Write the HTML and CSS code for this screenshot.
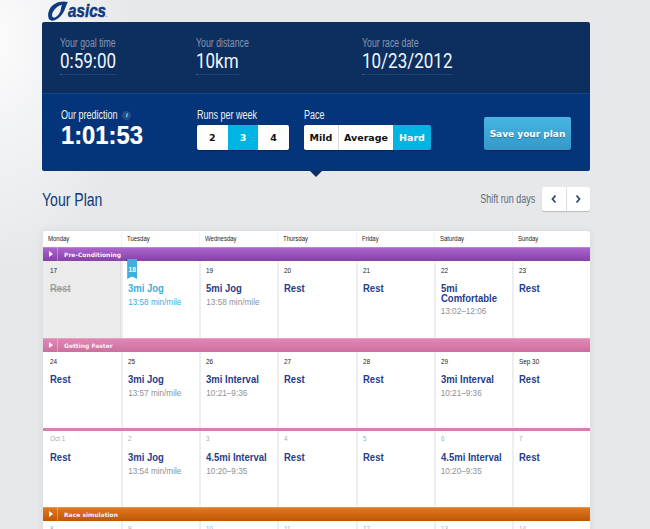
FILE: index.html
```html
<!DOCTYPE html>
<html lang="en">
<head>
<meta charset="utf-8">
<title>ASICS Your Plan</title>
<link rel="stylesheet" href="styles.css">
</head>
<body>
<div class="page">
  <header class="logo">
    <svg class="logo-mark" viewBox="0 0 20 20" width="20" height="20" aria-hidden="true">
      <path class="swoosh" fill-rule="evenodd" d="M19.800 1C13-1 5 2 2 7.500-1 13-.3 18.500 3 19.500 7 20.700 12 16.500 15 12 17 9 17.500 5.500 19.800 1ZM14 3.700C10 4.700 6.500 7.700 4.800 11 3.500 13.800 4 16.500 5.500 16.600 8 16.800 10.800 13.700 12.200 10.700 13.200 8.500 12.800 5.700 14 3.700Z"/>
    </svg>
    <span class="logo-word">asics<span class="logo-dot">.</span></span>
  </header>

  <section class="panel">
    <div class="goals">
      <div class="goal goal-time">
        <div class="goal-label">Your goal time</div>
        <div class="goal-value">0:59:00</div>
      </div>
      <div class="goal goal-distance">
        <div class="goal-label">Your distance</div>
        <div class="goal-value">10km</div>
      </div>
      <div class="goal">
        <div class="goal-label">Your race date</div>
        <div class="goal-value">10/23/2012</div>
      </div>
    </div>
    <div class="controls">
      <div class="prediction">
        <div class="prediction-head"><span class="control-label">Our prediction</span><span class="info">i</span></div>
        <div class="prediction-value">1:01:53</div>
      </div>
      <div class="control runs">
        <div class="control-label">Runs per week</div>
        <div class="segments">
          <span class="seg seg-run">2</span>
          <span class="seg seg-run seg-on">3</span>
          <span class="seg seg-run">4</span>
        </div>
      </div>
      <div class="control pace">
        <div class="control-label">Pace</div>
        <div class="segments">
          <span class="seg seg-mild">Mild</span>
          <span class="seg seg-average">Average</span>
          <span class="seg seg-hard seg-on">Hard</span>
        </div>
      </div>
      <button class="save" type="button">Save your plan</button>
    </div>
  </section>

  <div class="plan-head">
    <h1 class="plan-title">Your Plan</h1>
    <div class="shift">
      <span class="shift-label">Shift run days</span>
      <div class="shift-buttons">
        <span class="shift-btn"><svg viewBox="0 0 8 10" width="8" height="10" aria-hidden="true"><path class="chev" d="M5.500 1.500 2.500 5l3 3.500"/></svg></span>
        <span class="shift-btn"><svg viewBox="0 0 8 10" width="8" height="10" aria-hidden="true"><path class="chev" d="M2.500 1.500 5.500 5l-3 3.500"/></svg></span>
      </div>
    </div>
  </div>

  <section class="calendar">
    <div class="week days">
      <div class="dayname"><span>Monday</span></div><div class="dayname"><span>Tuesday</span></div><div class="dayname"><span>Wednesday</span></div><div class="dayname"><span>Thursday</span></div><div class="dayname"><span>Friday</span></div><div class="dayname"><span>Saturday</span></div><div class="dayname"><span>Sunday</span></div>
    </div>

    <div class="band band-purple"><span class="band-toggle"></span><span class="band-name">Pre-Conditioning</span></div>
    <div class="week week-first">
      <div class="cell cell-past"><div class="date">17</div><div class="workout past-text">Rest</div></div>
      <div class="cell cell-today">
        <div class="flag">18</div>
        <div class="workout">3mi Jog</div><div class="detail">13:58 min/mile</div>
      </div>
      <div class="cell"><div class="date">19</div><div class="workout">5mi Jog</div><div class="detail">13:58 min/mile</div></div>
      <div class="cell"><div class="date">20</div><div class="workout">Rest</div></div>
      <div class="cell"><div class="date">21</div><div class="workout">Rest</div></div>
      <div class="cell"><div class="date">22</div><div class="workout">5mi Comfortable</div><div class="detail">13:02–12:06</div></div>
      <div class="cell"><div class="date">23</div><div class="workout">Rest</div></div>
    </div>

    <div class="band band-pink"><span class="band-toggle"></span><span class="band-name">Getting Faster</span></div>
    <div class="week">
      <div class="cell"><div class="date">24</div><div class="workout">Rest</div></div>
      <div class="cell"><div class="date">25</div><div class="workout">3mi Jog</div><div class="detail">13:57 min/mile</div></div>
      <div class="cell"><div class="date">26</div><div class="workout">3mi Interval</div><div class="detail">10:21–9:36</div></div>
      <div class="cell"><div class="date">27</div><div class="workout">Rest</div></div>
      <div class="cell"><div class="date">28</div><div class="workout">Rest</div></div>
      <div class="cell"><div class="date">29</div><div class="workout">3mi Interval</div><div class="detail">10:21–9:36</div></div>
      <div class="cell"><div class="date">Sep 30</div><div class="workout">Rest</div></div>
    </div>
    <div class="rule-pink"></div>
    <div class="week week-faded">
      <div class="cell"><div class="date">Oct 1</div><div class="workout">Rest</div></div>
      <div class="cell"><div class="date">2</div><div class="workout">3mi Jog</div><div class="detail">13:54 min/mile</div></div>
      <div class="cell"><div class="date">3</div><div class="workout">4.5mi Interval</div><div class="detail">10:20–9:35</div></div>
      <div class="cell"><div class="date">4</div><div class="workout">Rest</div></div>
      <div class="cell"><div class="date">5</div><div class="workout">Rest</div></div>
      <div class="cell"><div class="date">6</div><div class="workout">4.5mi Interval</div><div class="detail">10:20–9:35</div></div>
      <div class="cell"><div class="date">7</div><div class="workout">Rest</div></div>
    </div>

    <div class="band band-orange"><span class="band-toggle"></span><span class="band-name">Race simulation</span></div>
    <div class="week week-faded">
      <div class="cell"><div class="date">8</div></div>
      <div class="cell"><div class="date">9</div></div>
      <div class="cell"><div class="date">10</div></div>
      <div class="cell"><div class="date">11</div></div>
      <div class="cell"><div class="date">12</div></div>
      <div class="cell"><div class="date">13</div></div>
      <div class="cell"><div class="date">14</div></div>
    </div>
  </section>
</div>
</body>
</html>
```
FILE: styles.css
```css
* { box-sizing: border-box; }
html, body { height: 100%; }
body {
  margin: 0;
  overflow: hidden;
  background: radial-gradient(ellipse 130px 230px at 0 40px, #fbfbfc 0, #e6e8ea 100%) no-repeat #e6e8ea;
  font-family: "Liberation Sans", Arial, sans-serif;
}
.page { width: 548px; margin-left: 42px; }

.logo { height: 22px; display: flex; align-items: flex-start; padding: 1px 0 0 6px; }
.logo-mark { display: block; flex: none; }
.swoosh { fill: #0f3a80; }
.logo-word {
  margin: -1px 0 0 0;
  font-size: 19px; line-height: 22px; font-weight: 700; font-style: italic;
  color: #0f3a80; -webkit-text-stroke: .5px #0f3a80;
  transform: scaleX(.8); transform-origin: left center;
}
.logo-dot { font-size: 6px; -webkit-text-stroke: 0; }

.panel { position: relative; border-radius: 2px; height: 149px; }
.panel::after {
  content: ""; position: absolute; left: 268px; top: 100%;
  border: 6px solid transparent; border-top-color: #0c2f5f; border-bottom: 0;
}
.goals {
  height: 71px; display: flex; padding-top: 14px; padding-left: 18px;
  background: #0c2f5f; border-radius: 2px 2px 0 0;
}
.goal-time { width: 136px; }
.goal-distance { width: 166px; }
.goal { flex: none; }
.goal-label {
  font-size: 12px; line-height: 14px; color: #8596b1;
  transform: scaleX(.73); transform-origin: left center;
}
.goal-value {
  display: table; margin-top: 1px;
  font-family: Roboto, sans-serif; font-size: 20px; line-height: 20px; color: #f4f6f9;
  padding-bottom: 3px; border-bottom: 1px dotted #3e5a84;
  transform: scaleX(.85); transform-origin: left center;
}
.controls {
  height: 78px; display: flex; padding: 14px 19px 0 19px; position: relative;
  background: #04357a; border-top: 1px solid #124487; border-radius: 0 0 2px 2px;
}
.prediction { width: 136px; }
.prediction-head { display: flex; align-items: center; height: 14px; }
.control-label {
  display: block; font-size: 12px; line-height: 14px; color: #edf1f7;
  transform: scaleX(.75); transform-origin: left center;
}
.info {
  flex: none; width: 9px; height: 9px; margin-left: -14px; border-radius: 50%;
  background: #234f8d; color: #d8e2f0; font: italic 700 6px/9px "Liberation Serif", serif; text-align: center;
}
.prediction-value {
  font-size: 25px; line-height: 28px; font-weight: 700; color: #fff; margin-top: -1px;
  -webkit-text-stroke: .2px #fff;
  transform: scaleX(.95); transform-origin: left center;
}
.runs { width: 107px; }
.pace { width: 181px; }
.segments { display: flex; margin-top: 3px; height: 25px; border-radius: 2px; overflow: hidden; box-shadow: 0 1px 1px rgba(0,0,0,.3); }
.runs .segments { width: 92px; }
.pace .segments { width: 127px; }
.seg {
  display: flex; align-items: center; justify-content: center;
  background: #fff; color: #111; font-family: "DejaVu Sans", sans-serif; font-size: 9.500px; font-weight: 700;
}
.seg-run { width: 31px; }
.seg-mild { width: 35px; border-right: 1px solid #d7d9dc; }
.seg-average { width: 54px; }
.seg-hard { width: 38px; }
.seg-on { background: #00b4e3; color: #fff; }
.save {
  align-self: flex-start; margin-top: 9px; margin-left: -1px;
  width: 87px; height: 33px; padding: 0; border: 0; border-radius: 2px;
  background: linear-gradient(#47b6e3, #3398c9);
  box-shadow: 0 1px 1px rgba(0,0,0,.35);
  color: #fff; font-family: "DejaVu Sans", sans-serif; font-size: 9px; font-weight: 700;
  text-shadow: 0 1px 1px rgba(0,0,0,.3);
}

.plan-head { height: 60px; display: flex; justify-content: space-between; align-items: flex-start; padding-top: 16px; }
.plan-title {
  margin: 0; font-size: 18px; line-height: 26px; font-weight: 400; color: #0f3a7a;
  transform: scaleX(.78); transform-origin: left center;
}
.shift { display: flex; align-items: center; gap: 7px; }
.shift-label {
  font-size: 12px; color: #5f6a79;
  transform: scaleX(.75); transform-origin: right center;
}
.shift-buttons { display: flex; width: 48px; height: 24px; border-radius: 2px; background: #fff; box-shadow: 0 1px 1px rgba(0,0,0,.2); }
.shift-btn { flex: 1; display: flex; align-items: center; justify-content: center; }
.shift-btn + .shift-btn { border-left: 1px solid #dcdfe2; }
.chev { fill: none; stroke: #33486e; stroke-width: 1.800; }

.calendar { background: #fff; border-radius: 3px 3px 0 0; margin-left: 1px; width: 547px; box-shadow: 0 0 8px rgba(0,0,0,.08); }
.week { display: grid; grid-template-columns: repeat(7, 1fr); height: 76px; }
.week-first { height: 77px; }
.days { height: 16px; }
.dayname {
  padding-left: 5px; font-size: 8px; line-height: 15px; color: #222;
  border-left: 1px solid #f2f3f4;
}
.dayname span { display: block; transform: scaleX(.75); transform-origin: left center; }
.dayname:first-child { border-left: 0; }
.band {
  height: 14px; display: flex; align-items: center; color: #f7eef8;
  font-family: "DejaVu Sans", sans-serif; font-size: 6px; font-weight: 700;
  box-shadow: inset 0 1px 0 rgba(255,255,255,.2);
}
.band-purple { background: linear-gradient(#ad67cf, #8641a9); }
.band-pink { background: linear-gradient(#e389b6, #cc6f9f); }
.band-orange { background: linear-gradient(#e57a21, #bd5703); }
.band-toggle {
  width: 15px; height: 100%; display: flex; align-items: center; justify-content: center;
  border-right: 1px solid rgba(255,255,255,.3);
}
.band-toggle::before {
  content: ""; border: 3px solid transparent; border-left: 4px solid #fff; border-right: 0; margin-left: 1px;
}
.band-name { margin-left: 6px; }
.cell {
  position: relative; padding: 5px 5px 0 5px;
  border-left: 2px solid #eceef0;
}
.cell:first-child { border-left: 0; padding-left: 7px; }
.cell-past { background: #ebebeb; border-right: 1px solid #dedede; }
.cell-today { padding-top: 15px; }
.cell-today::before { content: ""; position: absolute; left: 3px; top: -2px; width: 1px; height: 2px; background: #174a73; }
.cell-today .workout, .cell-today .detail { color: #3aaee0; }
.date {
  font-size: 7.500px; line-height: 10px; color: #222;
  transform: scaleX(.85); transform-origin: left center;
}
.week-faded .cell { padding-top: 3px; }
.week-faded .date { color: #a9adb2; }
.week-faded .workout { margin-top: 9px; }
.workout {
  margin-top: 8px; font-size: 10px; line-height: 9.500px; font-weight: 700; color: #25408a;
  transform: scaleX(.95); transform-origin: left center;
}
.past-text { color: #a2a2a2; text-decoration: line-through; }
.detail { margin-top: 3px; font-size: 8.200px; line-height: 11px; color: #8b929b; }
.flag {
  position: absolute; left: 4px; top: -2px; width: 10px; height: 20px;
  background: #3eb0e0; color: #fff; font-size: 6.500px; font-weight: 700; line-height: 21px; text-align: center;
  clip-path: polygon(0 0, 100% 0, 100% 100%, 50% 88%, 0 100%);
}
.rule-pink { height: 3px; margin: 0; background: #d77fae; }
```
